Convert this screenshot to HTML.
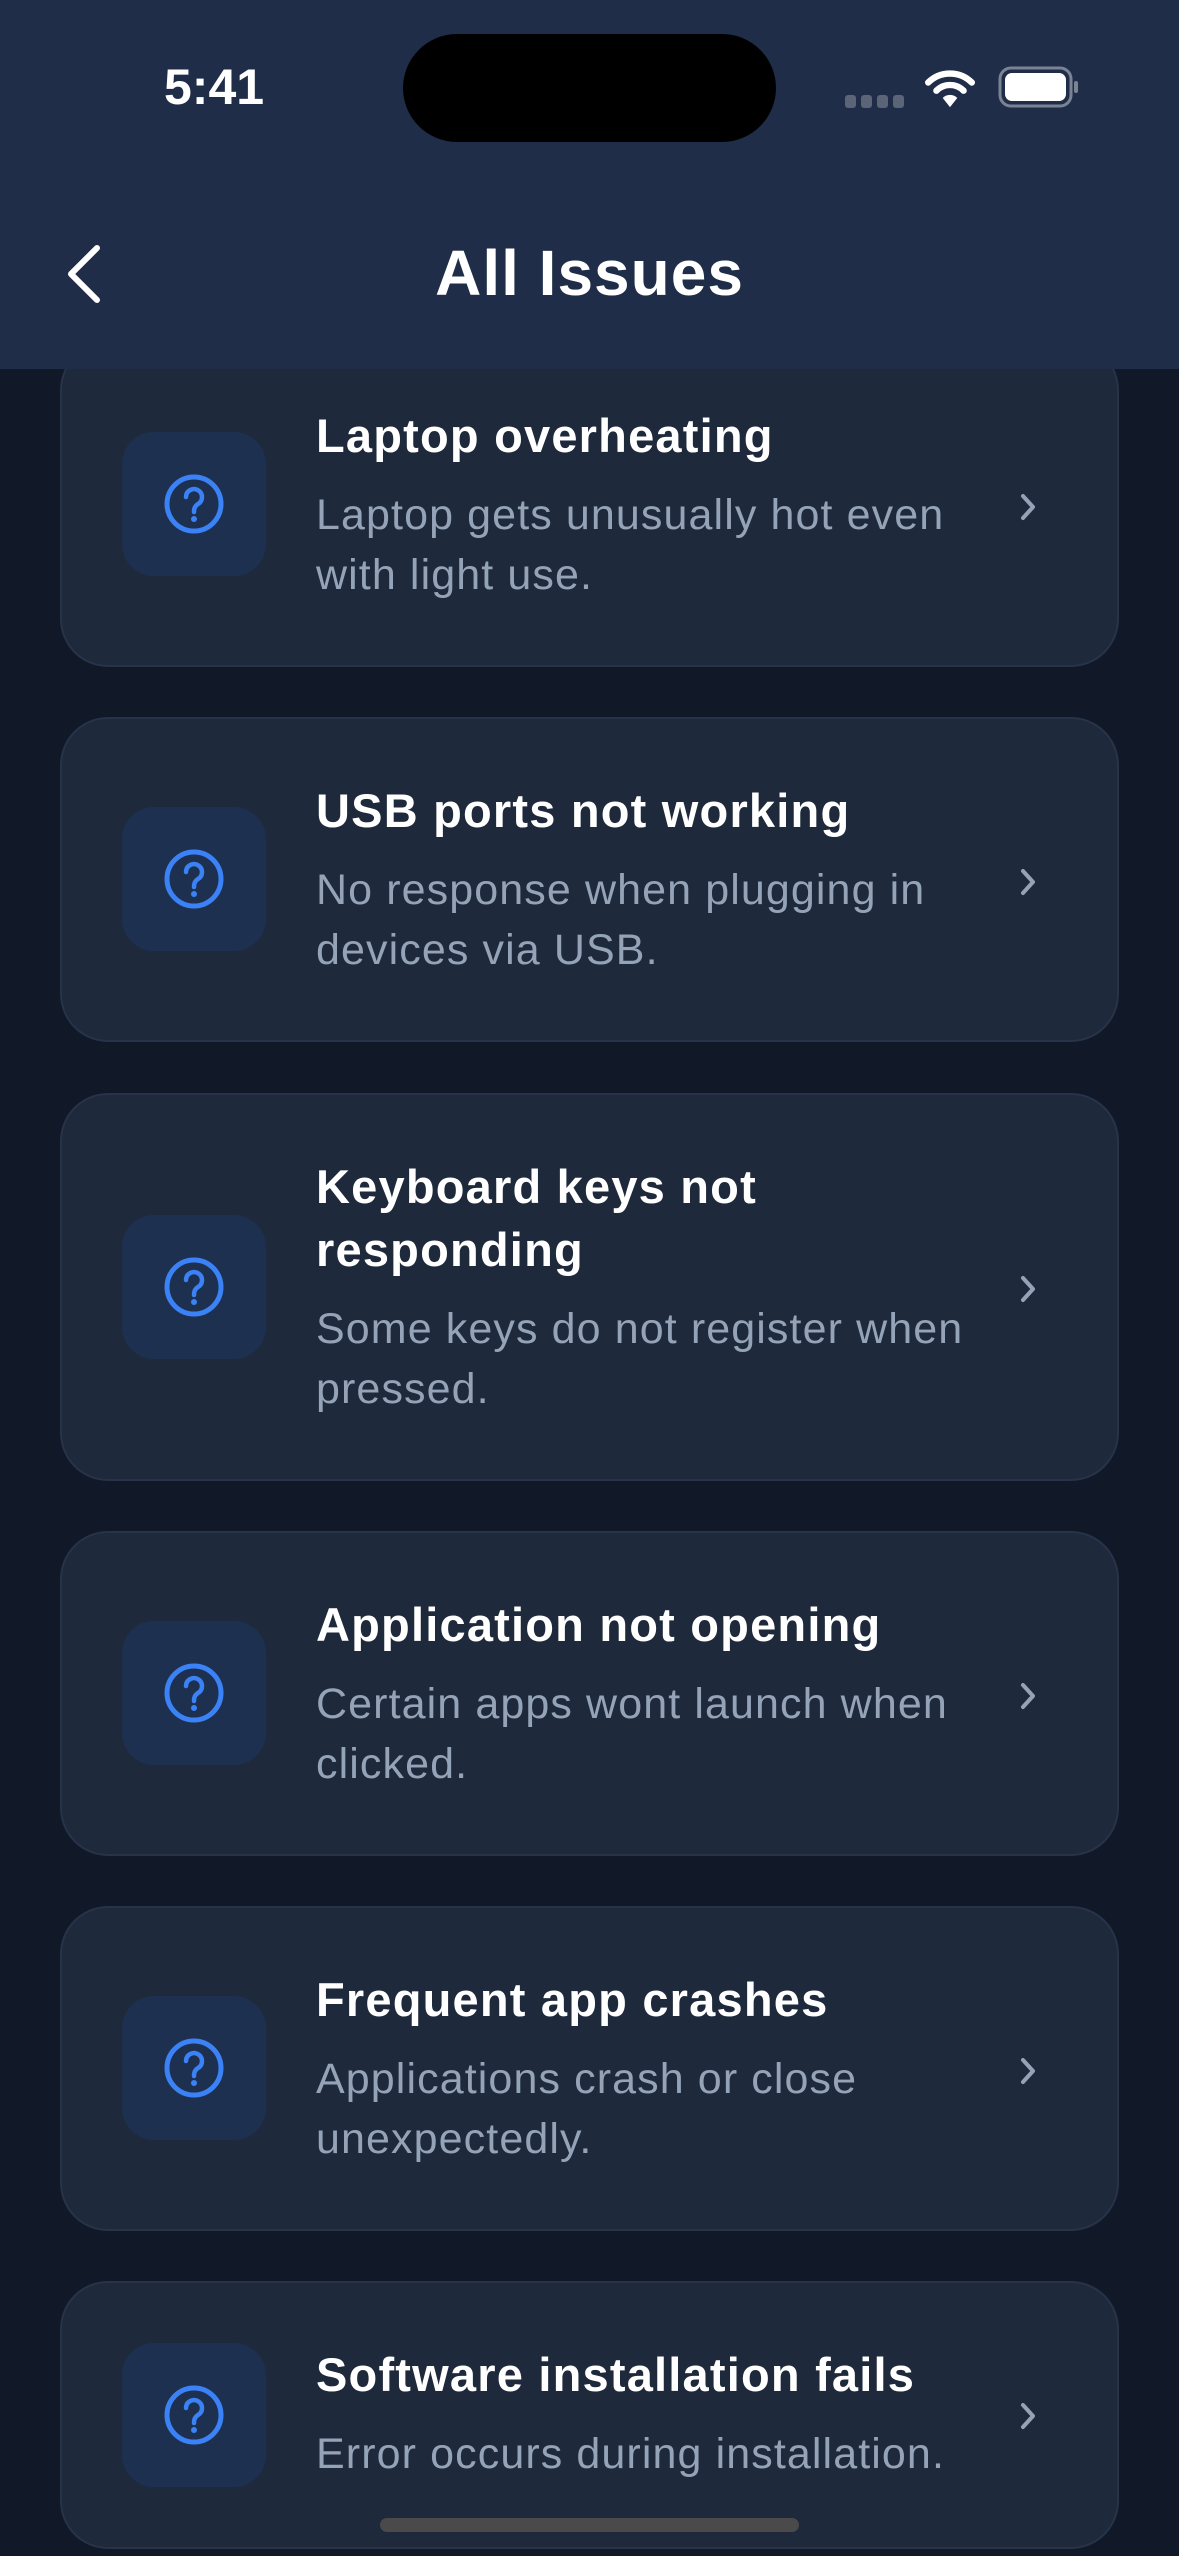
<!DOCTYPE html>
<html><head><meta charset="utf-8"><style>
*{margin:0;padding:0;box-sizing:border-box}
body{width:1179px;height:2556px;background:#111827;position:relative;overflow:hidden;font-family:"Liberation Sans",sans-serif}
.hdr{position:absolute;left:0;top:0;width:1179px;height:369px;background:#1f2d48;z-index:5}
.time{position:absolute;left:164px;top:58px;font-size:50px;font-weight:bold;color:#fff}
.island{position:absolute;left:403px;top:34px;width:373px;height:108px;border-radius:54px;background:#000}
.title{position:absolute;left:0;width:1179px;top:236px;text-align:center;font-size:64px;font-weight:bold;color:#fff;line-height:74px;letter-spacing:1px}
.card{position:absolute;left:60px;width:1059px;background:#1e293b;border:2px solid #263349;border-radius:48px}
.ib{position:absolute;left:60px;width:144px;height:144px;border-radius:32px;background:#1e3050;display:flex;align-items:center;justify-content:center}
.tx{position:absolute;left:254px;width:760px;white-space:nowrap}
.t{font-size:47px;font-weight:bold;color:#fff;line-height:63px;letter-spacing:1.2px}
.d{font-size:43px;color:#94a3b8;line-height:60px;margin-top:18px;letter-spacing:1.1px}
.ch{position:absolute;left:954px}
.home{position:absolute;left:380px;top:2518px;width:419px;height:14px;border-radius:7px;background:#4a4a4a;z-index:6}
</style></head><body>
<div class="hdr">
<div class="time">5:41</div>
<div class="island"></div>
<svg style="position:absolute;left:845px;top:93px" width="62" height="16"><g fill="#5b6577"><rect x="0" y="2" width="11" height="13" rx="3"/><rect x="16" y="2" width="11" height="13" rx="3"/><rect x="32" y="2" width="11" height="13" rx="3"/><rect x="48" y="2" width="11" height="13" rx="3"/></g></svg>
<svg style="position:absolute;left:925px;top:68px" width="50" height="40" viewBox="0 0 54 44"><path d="M3 16 A34 34 0 0 1 51 16" stroke="#fff" stroke-width="7" fill="none" stroke-linecap="round"/><path d="M12 25 A21 21 0 0 1 42 25" stroke="#fff" stroke-width="7" fill="none" stroke-linecap="round"/><path d="M19 33 L27 43 L35 33 A11 11 0 0 0 19 33Z" fill="#fff"/></svg>
<svg style="position:absolute;left:998px;top:66px" width="82" height="42"><rect x="2" y="2" width="71" height="38" rx="11" fill="none" stroke="#7a8394" stroke-width="3"/><rect x="7" y="7" width="61" height="28" rx="7" fill="#fff"/><rect x="76" y="15" width="4" height="12" rx="2" fill="#7a8394"/></svg>
<svg style="position:absolute;left:62px;top:243px" width="42" height="62"><path d="M35 5 L9 31 L35 57" stroke="#fff" stroke-width="6" fill="none" stroke-linecap="round" stroke-linejoin="round"/></svg>
<div class="title">All Issues</div>
</div>

<div class="card" style="top:342px;height:325px">
<div class="ib" style="top:88px"><svg width="64" height="64" viewBox="0 0 64 64"><circle cx="32" cy="32" r="27" stroke="#3b82f6" stroke-width="5" fill="none"/><path d="M24 25 a8 8 0 1 1 12 7 c-3 2 -4 4 -4 8" stroke="#3b82f6" stroke-width="4.5" fill="none" stroke-linecap="round"/><circle cx="32" cy="47" r="3" fill="#3b82f6"/></svg></div>
<div class="tx" style="top:60px"><div class="t">Laptop overheating</div><div class="d">Laptop gets unusually hot even<br>with light use.</div></div>
<svg class="ch" style="top:148px" width="24" height="30"><path d="M7 4 L17 15 L7 26" stroke="#94a3b8" stroke-width="4" fill="none" stroke-linecap="round" stroke-linejoin="round"/></svg>
</div>

<div class="card" style="top:717px;height:325px">
<div class="ib" style="top:88px"><svg width="64" height="64" viewBox="0 0 64 64"><circle cx="32" cy="32" r="27" stroke="#3b82f6" stroke-width="5" fill="none"/><path d="M24 25 a8 8 0 1 1 12 7 c-3 2 -4 4 -4 8" stroke="#3b82f6" stroke-width="4.5" fill="none" stroke-linecap="round"/><circle cx="32" cy="47" r="3" fill="#3b82f6"/></svg></div>
<div class="tx" style="top:60px"><div class="t">USB ports not working</div><div class="d">No response when plugging in<br>devices via USB.</div></div>
<svg class="ch" style="top:148px" width="24" height="30"><path d="M7 4 L17 15 L7 26" stroke="#94a3b8" stroke-width="4" fill="none" stroke-linecap="round" stroke-linejoin="round"/></svg>
</div>

<div class="card" style="top:1093px;height:388px">
<div class="ib" style="top:120px"><svg width="64" height="64" viewBox="0 0 64 64"><circle cx="32" cy="32" r="27" stroke="#3b82f6" stroke-width="5" fill="none"/><path d="M24 25 a8 8 0 1 1 12 7 c-3 2 -4 4 -4 8" stroke="#3b82f6" stroke-width="4.5" fill="none" stroke-linecap="round"/><circle cx="32" cy="47" r="3" fill="#3b82f6"/></svg></div>
<div class="tx" style="top:60px"><div class="t">Keyboard keys not<br>responding</div><div class="d">Some keys do not register when<br>pressed.</div></div>
<svg class="ch" style="top:179px" width="24" height="30"><path d="M7 4 L17 15 L7 26" stroke="#94a3b8" stroke-width="4" fill="none" stroke-linecap="round" stroke-linejoin="round"/></svg>
</div>

<div class="card" style="top:1531px;height:325px">
<div class="ib" style="top:88px"><svg width="64" height="64" viewBox="0 0 64 64"><circle cx="32" cy="32" r="27" stroke="#3b82f6" stroke-width="5" fill="none"/><path d="M24 25 a8 8 0 1 1 12 7 c-3 2 -4 4 -4 8" stroke="#3b82f6" stroke-width="4.5" fill="none" stroke-linecap="round"/><circle cx="32" cy="47" r="3" fill="#3b82f6"/></svg></div>
<div class="tx" style="top:60px"><div class="t">Application not opening</div><div class="d">Certain apps wont launch when<br>clicked.</div></div>
<svg class="ch" style="top:148px" width="24" height="30"><path d="M7 4 L17 15 L7 26" stroke="#94a3b8" stroke-width="4" fill="none" stroke-linecap="round" stroke-linejoin="round"/></svg>
</div>

<div class="card" style="top:1906px;height:325px">
<div class="ib" style="top:88px"><svg width="64" height="64" viewBox="0 0 64 64"><circle cx="32" cy="32" r="27" stroke="#3b82f6" stroke-width="5" fill="none"/><path d="M24 25 a8 8 0 1 1 12 7 c-3 2 -4 4 -4 8" stroke="#3b82f6" stroke-width="4.5" fill="none" stroke-linecap="round"/><circle cx="32" cy="47" r="3" fill="#3b82f6"/></svg></div>
<div class="tx" style="top:60px"><div class="t">Frequent app crashes</div><div class="d">Applications crash or close<br>unexpectedly.</div></div>
<svg class="ch" style="top:148px" width="24" height="30"><path d="M7 4 L17 15 L7 26" stroke="#94a3b8" stroke-width="4" fill="none" stroke-linecap="round" stroke-linejoin="round"/></svg>
</div>

<div class="card" style="top:2281px;height:268px">
<div class="ib" style="top:60px"><svg width="64" height="64" viewBox="0 0 64 64"><circle cx="32" cy="32" r="27" stroke="#3b82f6" stroke-width="5" fill="none"/><path d="M24 25 a8 8 0 1 1 12 7 c-3 2 -4 4 -4 8" stroke="#3b82f6" stroke-width="4.5" fill="none" stroke-linecap="round"/><circle cx="32" cy="47" r="3" fill="#3b82f6"/></svg></div>
<div class="tx" style="top:60px"><div class="t">Software installation fails</div><div class="d">Error occurs during installation.</div></div>
<svg class="ch" style="top:118px" width="24" height="30"><path d="M7 4 L17 15 L7 26" stroke="#94a3b8" stroke-width="4" fill="none" stroke-linecap="round" stroke-linejoin="round"/></svg>
</div>

<div class="home"></div>
</body></html>
